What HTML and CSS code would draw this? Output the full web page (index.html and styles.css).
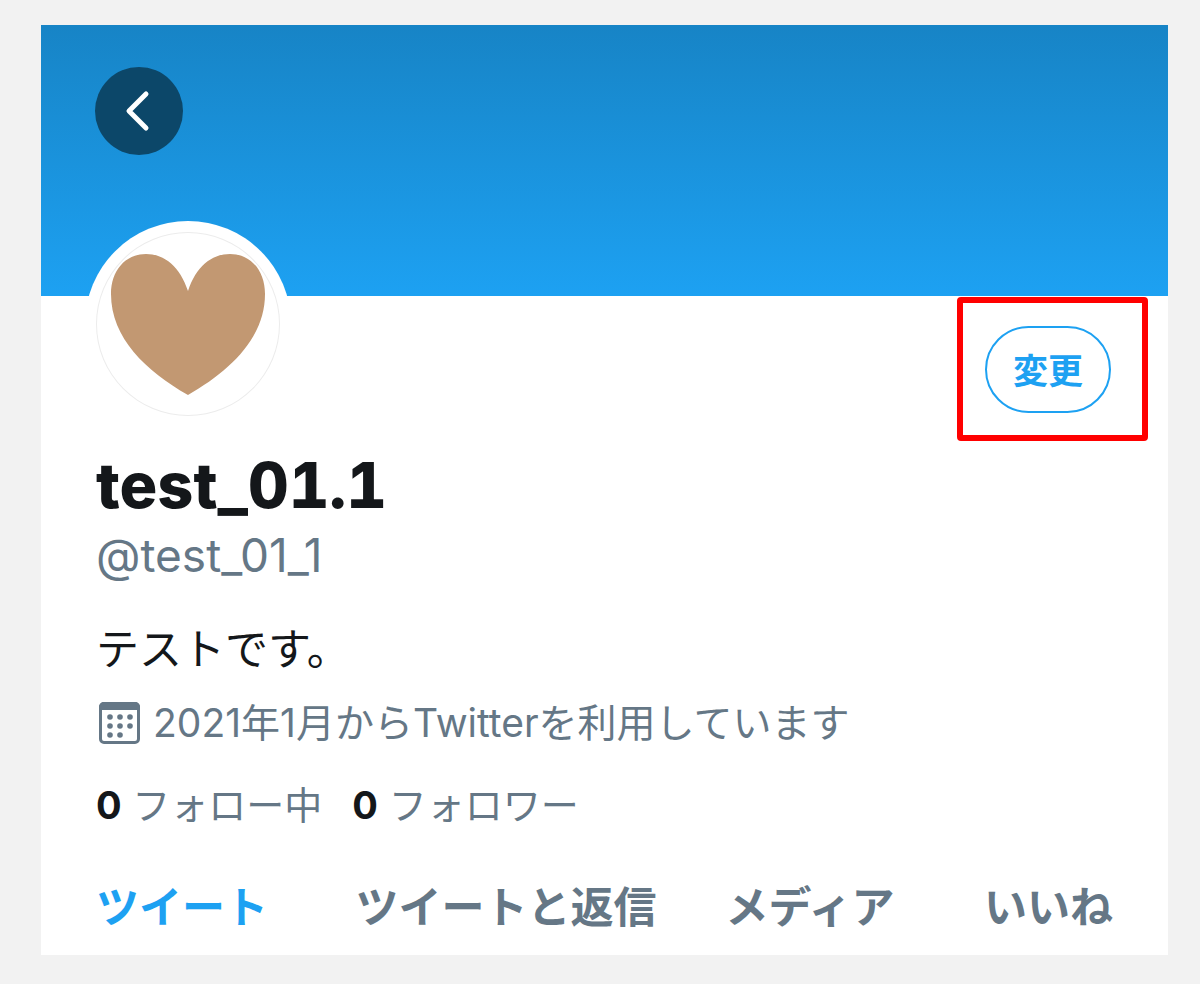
FILE: index.html
```html
<!DOCTYPE html>
<html lang="ja">
<head>
    <meta charset="UTF-8">
    <meta name="viewport" content="width=device-width, initial-scale=1.0">
    <title>test_01.1 (@test_01_1)</title>
    <link rel="stylesheet" href="styles.css">
</head>
<body>
    <main class="profile">
        <div class="cover">
            <button class="back-btn" type="button" aria-label="戻る">
                <svg viewBox="0 0 88 88" aria-hidden="true">
                    <path d="M51 27 L34 44 L51 61"/>
                </svg>
            </button>
        </div>
        <div class="profile-body">
            <div class="profile-top">
                <div class="avatar">
                    <svg viewBox="0 0 184 184" aria-hidden="true">
                        <path d="M92 59 C84 35 69 22 50 22 C29 22 15 39 15 62 C15 106 50 139 92 163 C134 139 169 106 169 62 C169 39 155 22 134 22 C115 22 100 35 92 59 Z"/>
                    </svg>
                </div>
                <div class="edit">
                    <button class="edit-btn" type="button">変更</button>
                </div>
            </div>
            <h1 class="name">test_01.1</h1>
            <p class="handle">@test_01_1</p>
            <p class="bio">テストです。</p>
            <p class="joined">
                <svg class="calendar" viewBox="0 0 42 42" aria-hidden="true">
                    <rect class="frame" x="1.500" y="1.500" width="38" height="39" rx="3.500"/>
                    <path d="M0 5a5 5 0 0 1 5-5h31a5 5 0 0 1 5 5v3H0z"/>
                    <circle cx="11" cy="15" r="2.800"/>
                    <circle cx="21" cy="15" r="2.800"/>
                    <circle cx="31" cy="15" r="2.800"/>
                    <circle cx="11" cy="24" r="2.800"/>
                    <circle cx="21" cy="24" r="2.800"/>
                    <circle cx="31" cy="24" r="2.800"/>
                    <circle cx="11" cy="33" r="2.800"/>
                    <circle cx="21" cy="33" r="2.800"/>
                </svg>
                <span>2021年1月からTwitterを利用しています</span>
            </p>
            <div class="stats">
                <a href="#following"><strong>0</strong> フォロー中</a>
                <a href="#followers"><strong>0</strong> フォロワー</a>
            </div>
            <nav class="tabs">
                <a class="active" href="#tweets">ツイート</a>
                <a href="#replies">ツイートと返信</a>
                <a href="#media">メディア</a>
                <a href="#likes">いいね</a>
            </nav>
        </div>
    </main>
</body>
</html>
```
FILE: styles.css
```css
* {
    box-sizing: border-box;
}

body {
    margin: 0;
    padding: 25px 32px 30px 41px;
    background-color: #f2f2f2;
    color: #14171a;
    font-family: Inter, "Noto Sans CJK JP", sans-serif;
}

h1, p {
    margin: 0;
}

a {
    color: inherit;
    text-decoration: none;
}

.profile {
    background-color: #fff;
}

.cover {
    height: 271px;
    padding: 42px 54px;
    background: linear-gradient(#1784c6, #1da1f2);
}

.back-btn {
    display: block;
    width: 88px;
    height: 88px;
    padding: 0;
    border: none;
    border-radius: 50%;
    background-color: #0c4769;
    cursor: pointer;
}

.back-btn svg {
    display: block;
    fill: none;
    stroke: #fff;
    stroke-width: 5;
    stroke-linecap: round;
    stroke-linejoin: round;
}

.profile-body {
    padding: 0 55px 18px;
}

.profile-top {
    display: flex;
    justify-content: space-between;
    align-items: flex-start;
}

.avatar {
    width: 206px;
    height: 206px;
    margin: -75px 0 0 -11px;
    padding: 11px;
    border-radius: 50%;
    background-color: #fff;
}

.avatar svg {
    display: block;
    border-radius: 50%;
    box-shadow: inset 0 0 0 1px #ececec;
    fill: #c29872;
}

.edit {
    position: relative;
    margin: 30px 2px 0 0;
}

.edit-btn {
    display: block;
    width: 126px;
    height: 87px;
    padding: 0 0 2px;
    border: 2px solid #1da1f2;
    border-radius: 44px;
    background-color: #fff;
    color: #1da1f2;
    font-family: inherit;
    font-size: 35px;
    font-weight: 700;
    cursor: pointer;
}

/* Red frame round the edit button */
.edit::after {
    content: "";
    position: absolute;
    inset: -29px -37px -28px -28px;
    border: 6px solid #f00;
    border-radius: 4px;
    pointer-events: none;
}

.name {
    margin-top: 18px;
    font-size: 63px;
    font-weight: 800;
    font-variant-numeric: tabular-nums;
    line-height: 80px;
}

.handle {
    color: #657786;
    font-size: 46px;
    line-height: 60px;
}

.bio {
    margin-top: 34px;
    font-size: 43px;
    line-height: 60px;
}

.joined {
    display: flex;
    align-items: center;
    gap: 12px;
    margin-top: 16px;
    color: #657786;
    font-size: 39px;
    line-height: 56px;
}

.calendar {
    width: 42px;
    height: 42px;
    margin-left: 3px;
    fill: #657786;
}

.calendar .frame {
    fill: none;
    stroke: #657786;
    stroke-width: 3;
}

.stats {
    display: flex;
    gap: 30px;
    margin-top: 26px;
    color: #657786;
    font-size: 38px;
    line-height: 56px;
}

.stats strong {
    color: #14171a;
    font-weight: 700;
}

.tabs {
    display: grid;
    grid-template-columns: 260fr 371fr 259fr 127fr;
    margin-top: 44px;
    color: #657786;
    font-size: 43px;
    font-weight: 700;
    line-height: 60px;
    white-space: nowrap;
}

.tabs .active {
    color: #1da1f2;
}
```
